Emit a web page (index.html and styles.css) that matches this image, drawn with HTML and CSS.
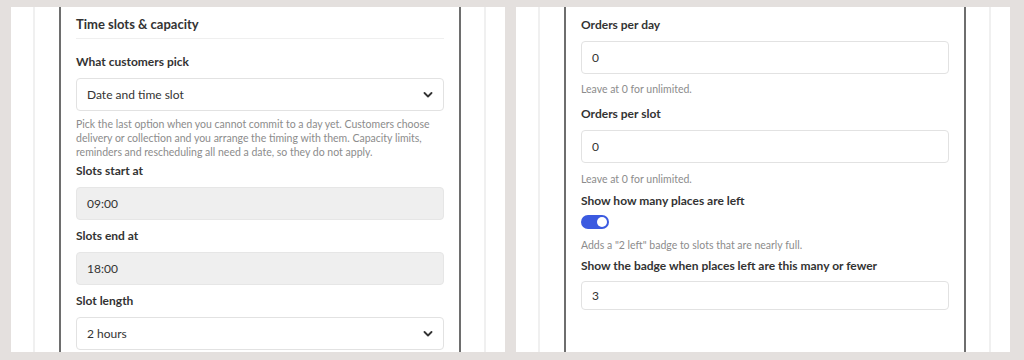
FILE: index.html
```html
<!DOCTYPE html>
<html lang="en">
<head>
    <meta charset="UTF-8">
    <meta name="viewport" content="width=device-width, initial-scale=1.0">
    <title>Time slots settings</title>
    <link rel="stylesheet" href="styles.css">
</head>
<body>
    <div class="board">
        <!-- left shot: slot setup -->
        <div class="shot">
            <div class="rail">
                <div class="page">
                    <h2 class="section-title">Time slots &amp; capacity</h2>

                    <div class="field with-help">
                        <label>What customers pick</label>
                        <div class="control select">
                            <span>Date and time slot</span>
                            <svg class="chevron" width="10" height="6" viewBox="0 0 10 6">
                                <polyline points="1.5,1 5,4.5 8.5,1" fill="none" stroke="#333" stroke-width="1.8" stroke-linecap="round" stroke-linejoin="round"/>
                            </svg>
                        </div>
                        <p class="help">Pick the last option when you cannot commit to a day yet. Customers choose delivery or collection and you arrange the timing with them. Capacity limits, reminders and rescheduling all need a date, so they do not apply.</p>
                    </div>

                    <div class="field">
                        <label>Slots start at</label>
                        <div class="control disabled">09:00</div>
                    </div>

                    <div class="field">
                        <label>Slots end at</label>
                        <div class="control disabled">18:00</div>
                    </div>

                    <div class="field">
                        <label>Slot length</label>
                        <div class="control select">
                            <span>2 hours</span>
                            <svg class="chevron" width="10" height="6" viewBox="0 0 10 6">
                                <polyline points="1.5,1 5,4.5 8.5,1" fill="none" stroke="#333" stroke-width="1.8" stroke-linecap="round" stroke-linejoin="round"/>
                            </svg>
                        </div>
                    </div>
                </div>
            </div>
        </div>

        <!-- right shot: capacity -->
        <div class="shot">
            <div class="rail">
                <div class="page page-cont">
                    <div class="field f-day">
                        <label>Orders per day</label>
                        <div class="control">0</div>
                        <p class="hint">Leave at 0 for unlimited.</p>
                    </div>

                    <div class="field f-slot">
                        <label>Orders per slot</label>
                        <div class="control">0</div>
                        <p class="hint">Leave at 0 for unlimited.</p>
                    </div>

                    <div class="field f-left">
                        <label>Show how many places are left</label>
                        <span class="switch on"></span>
                        <p class="hint">Adds a "2 left" badge to slots that are nearly full.</p>
                    </div>

                    <div class="field f-badge">
                        <label>Show the badge when places left are this many or fewer</label>
                        <div class="control short">3</div>
                    </div>
                </div>
            </div>
        </div>
    </div>
</body>
</html>
```

FILE: styles.css
```css
* {
    box-sizing: border-box;
}

body {
    margin: 0;
    background: #e4e0de;
    font-family: "Lato", "Open Sans", sans-serif;
    color: #333;
}

.board {
    display: flex;
    gap: 11px;
    padding: 7px 13px 8px 11px;
}

.shot {
    width: 494px;
    height: 345px;
    background: #fff;
    overflow: hidden;
    display: flex;
    padding-left: 22px;
}

.rail {
    width: 453px;
    border-left: 2px solid #f0f0f0;
    border-right: 2px solid #f0f0f0;
    padding: 0 23px 0 24px;
}

.page {
    height: 100%;
    border-left: 2px solid #6e6e6e;
    border-right: 2px solid #6e6e6e;
    padding: 8px 15px 0 15px;
}

.page-cont {
    padding-top: 10px;
}

.section-title {
    margin: 0 0 15px 0;
    padding-bottom: 5px;
    border-bottom: 1px solid #efefef;
    font-size: 13px;
    font-weight: 700;
    line-height: 18px;
}

.field {
    margin-bottom: 8px;
}

.field.with-help {
    margin-bottom: 4px;
}

.field label {
    display: block;
    font-size: 12px;
    font-weight: 700;
    line-height: 16px;
    margin-bottom: 8px;
}

.control {
    height: 33px;
    border: 1px solid #e2e2e2;
    border-radius: 4px;
    padding: 0 10px;
    font-size: 12px;
    display: flex;
    align-items: center;
    justify-content: space-between;
}

.control.disabled {
    background: #efefef;
    border-color: #e6e6e6;
}

.control.short {
    height: 29px;
}

.help,
.hint {
    margin: 6px 0 0 0;
    font-size: 10.5px;
    line-height: 14px;
    color: #8c8c8c;
}

.hint {
    margin-top: 8px;
}

.f-day {
    margin-bottom: 10px;
}

.f-slot {
    margin-bottom: 7px;
}

.f-slot .hint {
    margin-top: 9px;
}

.f-left {
    margin-bottom: 6px;
}

.f-left label {
    margin-bottom: 6px;
}

.f-left .hint {
    margin-top: 9px;
}

.f-badge label {
    margin-bottom: 7px;
}

.switch {
    display: block;
    width: 28px;
    height: 14px;
    border-radius: 7px;
    background: #3b5ae0;
    position: relative;
}

.switch::after {
    content: "";
    position: absolute;
    top: 2px;
    right: 2px;
    width: 10px;
    height: 10px;
    border-radius: 50%;
    background: #fff;
}
```
